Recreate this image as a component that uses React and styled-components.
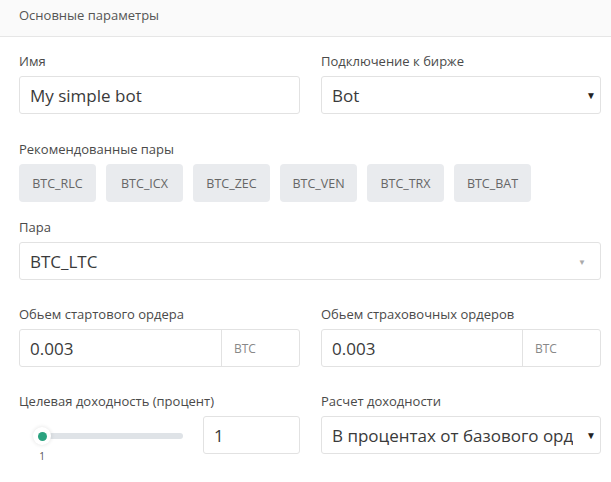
import styled, { createGlobalStyle } from 'styled-components'

const GlobalStyle = createGlobalStyle`
    body {
        margin: 0;
        background: #fff;
        font-family: "Open Sans", "Noto Sans", sans-serif;
    }
`;

const Panel = styled.div`
    width: 611px;
    height: 482px;
    background: #fff;
    overflow: hidden;
`;

const Header = styled.div`
    height: 37px;
    box-sizing: border-box;
    padding: 6px 19px 0;
    background: #fafafa;
    border-bottom: 1px solid #e6e6e6;
    font-size: 13px;
    line-height: 18px;
    color: #555;
`;

const Body = styled.div`
    padding: 15px 10px 0 19px;
`;

const Row = styled.div`
    display: grid;
    grid-template-columns: 281px 280px;
    column-gap: 21px;
    margin-bottom: ${p => p.$mb || 26}px;
`;

const Group = styled.div`
    margin-bottom: ${p => p.$mb || 0}px;
`;

const Label = styled.div`
    font-size: 13px;
    line-height: 18px;
    color: #4a4a4a;
    margin-bottom: 6px;
    white-space: nowrap;
`;

const Field = styled.div`
    height: 38px;
    box-sizing: border-box;
    border: 1px solid #e2e2e2;
    border-radius: 3px;
    background: #fff;
    display: flex;
    align-items: center;
    padding-left: 10px;
    font-size: 17px;
    color: #3a3a3a;
    overflow: hidden;
    width: ${p => p.$w || 'auto'};
`;

const FieldText = styled.span`
    flex: 1;
    min-width: 0;
    white-space: nowrap;
    overflow: hidden;
`;

const Caret = styled.span`
    width: ${p => p.$muted ? 36 : 18}px;
    padding-left: ${p => p.$muted ? 0 : 9}px;
    flex: none;
    text-align: center;
    font-size: ${p => p.$muted ? 8 : 10}px;
    color: ${p => p.$muted ? '#aaa' : '#222'};
`;

const Addon = styled.span`
    width: 78px;
    height: 100%;
    flex: none;
    display: flex;
    align-items: center;
    padding-left: 12px;
    box-sizing: border-box;
    border-left: 1px solid #e2e2e2;
    font-size: 12px;
    color: #888;
`;

const Chips = styled.div`
    display: flex;
    gap: 10px;
`;

const Chip = styled.div`
    height: 38px;
    width: 77px;
    box-sizing: border-box;
    border-radius: 4px;
    background: #e9ebee;
    display: flex;
    align-items: center;
    justify-content: center;
    font-size: 12.5px;
    color: #666;
`;

const SliderRow = styled.div`
    display: flex;
    align-items: flex-start;
`;

const Slider = styled.div`
    width: 147px;
    margin: 17px 20px 0 17px;
    position: relative;
    height: 30px;
`;

const Track = styled.div`
    position: absolute;
    left: 7px;
    right: 0;
    top: 0;
    height: 6px;
    border-radius: 3px;
    background: #dfe3e7;
`;

const Thumb = styled.div`
    position: absolute;
    left: -3px;
    top: -6px;
    width: 18px;
    height: 18px;
    border-radius: 50%;
    background: #fff;
    box-shadow: 0 0 4px rgba(0, 0, 0, 0.12);
    display: flex;
    align-items: center;
    justify-content: center;
    &::after {
        content: '';
        width: 9px;
        height: 9px;
        border-radius: 50%;
        background: #2aa27f;
    }
`;

const Tick = styled.span`
    position: absolute;
    left: 1px;
    top: 16px;
    width: 10px;
    text-align: center;
    font-size: 10px;
    color: #555;
`;

const pairs = ['BTC_RLC', 'BTC_ICX', 'BTC_ZEC', 'BTC_VEN', 'BTC_TRX', 'BTC_BAT']

const App = () => {
    return (
        <Panel>
            <GlobalStyle />
            <Header>Основные параметры</Header>
            <Body>
                <Row>
                    <div>
                        <Label>Имя</Label>
                        <Field><FieldText>My simple bot</FieldText></Field>
                    </div>
                    <div>
                        <Label>Подключение к бирже</Label>
                        <Field><FieldText>Bot</FieldText><Caret>▼</Caret></Field>
                    </div>
                </Row>

                <Group $mb={16}>
                    <Label>Рекомендованные пары</Label>
                    <Chips>
                        {pairs.map(p => <Chip key={p}>{p}</Chip>)}
                    </Chips>
                </Group>

                <Group $mb={25}>
                    <Label>Пара</Label>
                    <Field><FieldText>BTC_LTC</FieldText><Caret $muted>▼</Caret></Field>
                </Group>

                <Row $mb={25}>
                    <div>
                        <Label>Обьем стартового ордера</Label>
                        <Field><FieldText>0.003</FieldText><Addon>BTC</Addon></Field>
                    </div>
                    <div>
                        <Label>Обьем страховочных ордеров</Label>
                        <Field><FieldText>0.003</FieldText><Addon>BTC</Addon></Field>
                    </div>
                </Row>

                <Row>
                    <div>
                        <Label>Целевая доходность (процент)</Label>
                        <SliderRow>
                            <Slider>
                                <Track />
                                <Thumb />
                                <Tick>1</Tick>
                            </Slider>
                            <Field $w="97px"><FieldText>1</FieldText></Field>
                        </SliderRow>
                    </div>
                    <div>
                        <Label>Расчет доходности</Label>
                        <Field><FieldText>В процентах от базового ордера</FieldText><Caret>▼</Caret></Field>
                    </div>
                </Row>
            </Body>
        </Panel>
    )
}

export default App
